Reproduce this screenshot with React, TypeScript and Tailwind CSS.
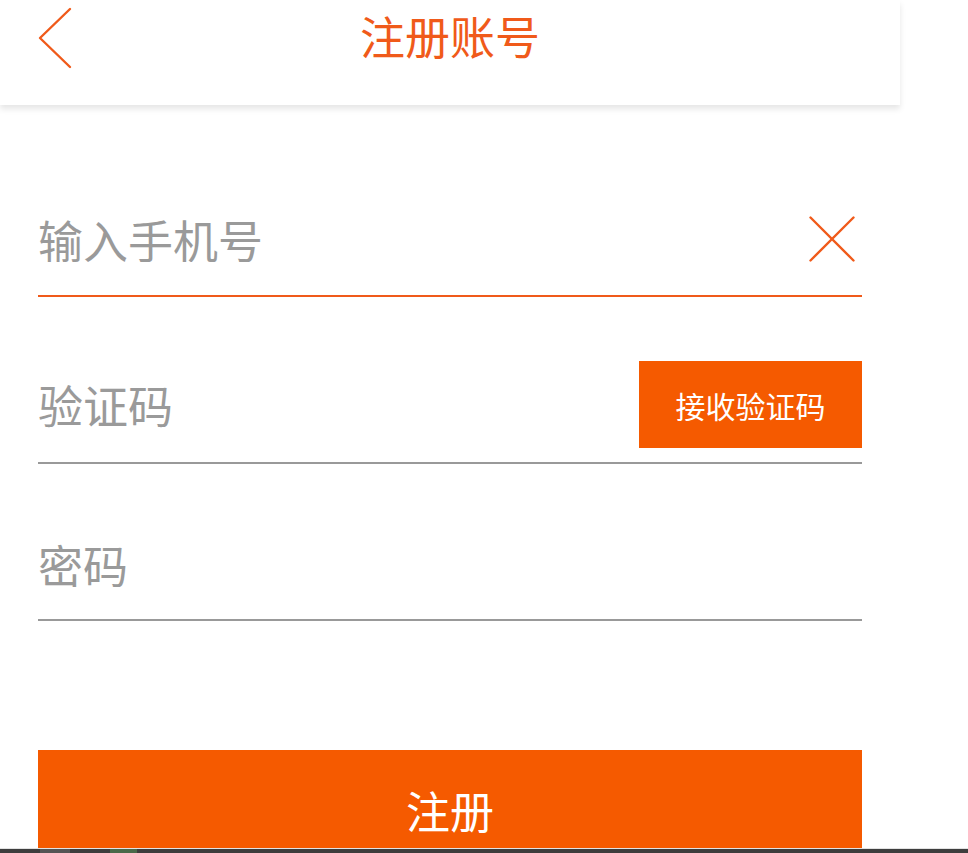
import { useState } from 'react'

const cjk = { fontFamily: '"Noto Sans CJK SC", "Noto Sans", sans-serif' }

function ChevronLeft() {
  return (
    <svg width="40" height="64" viewBox="0 0 40 64" fill="none">
      <path d="M34 3 L4 32 L34 61" stroke="#f05a1a" strokeWidth={2.4} strokeLinecap="round" strokeLinejoin="round" />
    </svg>
  )
}

function ClearIcon() {
  return (
    <svg width="46" height="46" viewBox="0 0 46 46" fill="none">
      <path d="M1.5 1.5 L44.5 44.5 M44.5 1.5 L1.5 44.5" stroke="#f05a1a" strokeWidth={2.4} strokeLinecap="round" />
    </svg>
  )
}

export default function App() {
  const [phone, setPhone] = useState('')
  const [code, setCode] = useState('')
  const [password, setPassword] = useState('')

  return (
    <div className="w-[968px] h-[853px] bg-white overflow-hidden flex flex-col" style={cjk}>
      <div className="w-[900px] shrink-0 flex flex-col">
        {/* header */}
        <header className="h-[105px] bg-white shadow-[0_4px_6px_rgba(0,0,0,0.10)] relative z-10">
          <div className="h-[76px] grid grid-cols-[1fr_auto_1fr] items-center">
            <button className="pl-[36px] flex items-center">
              <ChevronLeft />
            </button>
            <h1 className="text-[45px] leading-none text-[#f05a1a] mb-[6px]">注册账号</h1>
            <div />
          </div>
        </header>

        <form className="px-[38px] flex flex-col" onSubmit={(e) => e.preventDefault()}>
          <div className="mt-[111px] pb-[33px] flex items-center border-b-2 border-[#f05a1a]">
            <input
              value={phone}
              onChange={(e) => setPhone(e.target.value)}
              placeholder="输入手机号"
              className="flex-1 h-[46px] text-[45px] leading-none text-[#333] placeholder:text-[#9a9a9a] outline-none bg-transparent"
              style={cjk}
            />
            <button type="button" onClick={() => setPhone('')} className="mr-[7px]">
              <ClearIcon />
            </button>
          </div>

          <div className="mt-[64px] pb-[14px] flex items-center border-b-2 border-[#999999]">
            <input
              value={code}
              onChange={(e) => setCode(e.target.value)}
              placeholder="验证码"
              className="flex-1 h-[46px] text-[45px] leading-none text-[#333] placeholder:text-[#9a9a9a] outline-none bg-transparent"
              style={cjk}
            />
            <button type="button" className="w-[223px] h-[87px] bg-[#f55a00] text-white text-[30px] leading-none">
              接收验证码
            </button>
          </div>

          <div className="mt-[77px] pb-[32px] flex items-center border-b-2 border-[#999999]">
            <input
              type="password"
              value={password}
              onChange={(e) => setPassword(e.target.value)}
              placeholder="密码"
              className="flex-1 h-[46px] text-[45px] leading-none text-[#333] placeholder:text-[#9a9a9a] outline-none bg-transparent"
              style={cjk}
            />
          </div>

          <button type="submit" className="mt-[129px] h-[98px] bg-[#f55a00] text-white text-[44px] leading-none flex justify-center pt-[38px]">
            注册
          </button>
        </form>
      </div>

      {/* system nav bar edge */}
      <div className="h-px shrink-0 bg-[#e2e2e2]" />
      <div className="h-[4px] shrink-0 bg-[#3d3d3d] flex">
        <div className="w-[40px]" />
        <div className="w-[30px] bg-[#555]" />
        <div className="w-[40px]" />
        <div className="w-[27px] bg-[#4a6a4a]" />
      </div>
    </div>
  )
}
